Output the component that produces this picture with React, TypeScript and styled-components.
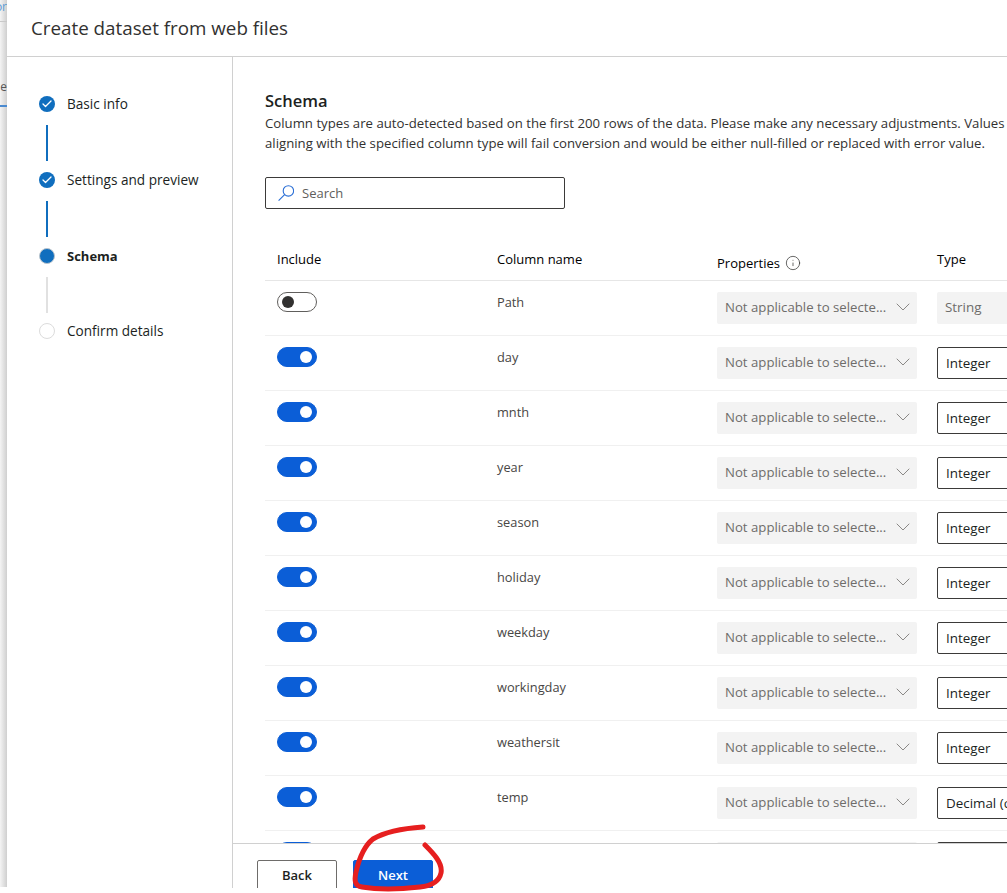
import styled, { createGlobalStyle } from "styled-components";
import { Check, ChevronDown, Info } from "lucide-react";

const GlobalStyle = createGlobalStyle`
  html, body {
    margin: 0;
    padding: 0;
    background: #fff;
  }
  body {
    font-family: "Open Sans", "Noto Sans", "Liberation Sans", sans-serif;
    color: #323130;
  }
  * {
    box-sizing: border-box;
  }
`;

const Page = styled.div`
  position: relative;
  width: 1007px;
  height: 893px;
  display: flex;
  overflow: hidden;
  background: #fff;
`;

const BackPage = styled.div`
  width: 7px;
  height: 887px;
  flex: none;
  overflow: hidden;
  background: linear-gradient(90deg, #f4f4f4, #cfcfcf);
  display: flex;
  flex-direction: column;

  .top {
    height: 22px;
    font-size: 12px;
    line-height: 14px;
    color: #5b9bd5;
    border-bottom: 1px solid #c9c9c9;
    white-space: nowrap;
    direction: rtl;
  }
  .tab {
    margin-top: 57px;
    height: 28px;
    font-size: 12px;
    line-height: 16px;
    color: #555;
    border-bottom: 2px solid #4a8ad0;
    direction: rtl;
  }
`;

const Panel = styled.div`
  flex: 1;
  min-width: 0;
  height: 888px;
  display: flex;
  flex-direction: column;
`;

const Header = styled.header`
  height: 57px;
  flex: none;
  padding: 15px 0 0 24px;
  border-bottom: 1px solid #d0d0d0;
  font-size: 18.8px;
  line-height: 26px;
  color: #323130;
`;

const Body = styled.div`
  flex: 1;
  min-height: 0;
  display: flex;
`;

const Steps = styled.nav`
  width: 226px;
  flex: none;
  padding: 39px 0 0 32px;
  border-right: 1px solid #d0d0d0;
`;

const StepRow = styled.div`
  display: flex;
  align-items: center;
  gap: 12px;
  height: 16px;
`;

const StepDot = styled.span<{ $state: "done" | "current" | "todo" }>`
  width: 16px;
  height: 16px;
  flex: none;
  border-radius: 50%;
  display: flex;
  align-items: center;
  justify-content: center;
  color: #fff;
  background: ${(p) => (p.$state === "todo" ? "#fff" : "#106ebe")};
  border: ${(p) =>
    p.$state === "todo"
      ? "1.5px solid #dcdcdc"
      : p.$state === "current"
        ? "1.5px solid #b9c4cd"
        : "none"};
`;

const StepLabel = styled.span<{ $bold?: boolean }>`
  font-size: ${(p) => (p.$bold ? 13 : 13.6)}px;
  line-height: 16px;
  font-weight: ${(p) => (p.$bold ? 700 : 500)};
  color: #201f1e;
  white-space: nowrap;
`;

const StepLine = styled.div<{ $active?: boolean }>`
  width: 2px;
  height: 36px;
  margin: 13px 0 ${(p) => (p.$active ? 11 : 10)}px 7px;
  background: ${(p) => (p.$active ? "#106ebe" : "#e1e1e1")};
`;

const Main = styled.main`
  flex: 1;
  min-width: 0;
  display: flex;
  flex-direction: column;
`;

const Scroll = styled.div`
  flex: 1;
  min-height: 0;
  overflow: hidden;
  padding: 34px 0 0 32px;
`;

const Title = styled.h2`
  margin: 0;
  font-size: 16.5px;
  line-height: 20px;
  font-weight: 600;
  color: #201f1e;
`;

const Description = styled.p`
  margin: 2px 0 0;
  width: 790px;
  font-size: 13.2px;
  line-height: 20px;
  color: #323130;
`;

const SearchBox = styled.div`
  width: 300px;
  height: 32px;
  margin-top: 24px;
  padding-left: 12px;
  display: flex;
  align-items: center;
  gap: 8px;
  border: 1px solid #3b3a39;
  border-radius: 2px;
  font-size: 13px;
  color: #605e5c;

  svg {
    color: #2b6fd6;
  }
`;

const HeadRow = styled.div`
  width: 800px;
  height: 72px;
  display: grid;
  grid-template-columns: 220px 220px 220px 1fr;
  border-bottom: 1px solid #e6e6e6;
`;

const HeadCell = styled.div<{ $offset: number }>`
  padding: ${(p) => p.$offset}px 0 0 12px;
  display: flex;
  align-items: flex-start;
  gap: 5px;
  font-size: 13px;
  line-height: 20px;
  font-weight: 500;
  color: #000;

  svg {
    margin-top: 2px;
    color: #323130;
  }
`;

const Row = styled.div`
  width: 800px;
  height: 55px;
  display: grid;
  grid-template-columns: 220px 220px 220px 1fr;
  border-bottom: 1px solid #f0f0f0;
  overflow: hidden;
`;

const Cell = styled.div`
  padding: 11px 0 0 12px;
  min-width: 0;
`;

const Toggle = styled.span<{ $on: boolean }>`
  width: 40px;
  height: 20px;
  display: flex;
  align-items: center;
  padding: 0 4px;
  justify-content: ${(p) => (p.$on ? "flex-end" : "flex-start")};
  border-radius: 10px;
  background: ${(p) => (p.$on ? "#0b5ed7" : "#fff")};
  border: 1px solid ${(p) => (p.$on ? "#0b5ed7" : "#605e5c")};

  &::after {
    content: "";
    width: 12px;
    height: 12px;
    border-radius: 50%;
    background: ${(p) => (p.$on ? "#fff" : "#323130")};
  }
`;

const ColumnName = styled.span`
  display: block;
  font-size: 12.8px;
  line-height: 20px;
  color: #484644;
`;

const Select = styled.div`
  width: 200px;
  height: 32px;
  padding: 0 8px 2px;
  display: flex;
  align-items: center;
  justify-content: space-between;
  border-radius: 2px;
  background: #f3f3f3;
  font-size: 13.2px;
  color: #6e6c6a;
  white-space: nowrap;

  svg {
    flex: none;
    margin-right: -6px;
    color: #8a8886;
  }
`;

const TypeField = styled.div<{ $disabled?: boolean }>`
  width: 200px;
  height: 32px;
  padding: 0 8px ${(p) => (p.$disabled ? 2 : 1)}px;
  display: flex;
  align-items: center;
  border-radius: 2px;
  font-size: 13.4px;
  white-space: nowrap;
  color: ${(p) => (p.$disabled ? "#6e6c6a" : "#201f1e")};
  background: ${(p) => (p.$disabled ? "#f3f3f3" : "#fff")};
  border: ${(p) => (p.$disabled ? "none" : "1px solid #3b3a39")};
`;

const Footer = styled.footer`
  height: 45px;
  flex: none;
  padding: 16px 0 0 24px;
  display: flex;
  gap: 16px;
  border-top: 1px solid #d0d0d0;
  overflow: hidden;
`;

const Button = styled.button<{ $primary?: boolean }>`
  width: 80px;
  height: 32px;
  padding: 0 0 2px;
  font-family: inherit;
  font-size: 13px;
  font-weight: 600;
  border-radius: 2px;
  color: ${(p) => (p.$primary ? "#fff" : "#201f1e")};
  background: ${(p) => (p.$primary ? "#0b5ed7" : "#fff")};
  border: 1px solid ${(p) => (p.$primary ? "#0b5ed7" : "#6e6c6a")};
`;

const Scribble = styled.svg`
  position: absolute;
  left: 340px;
  top: 815px;
  pointer-events: none;
`;

const rows = [
  { name: "day", type: "Integer" },
  { name: "mnth", type: "Integer" },
  { name: "year", type: "Integer" },
  { name: "season", type: "Integer" },
  { name: "holiday", type: "Integer" },
  { name: "weekday", type: "Integer" },
  { name: "workingday", type: "Integer" },
  { name: "weathersit", type: "Integer" },
  { name: "temp", type: "Decimal (comma)" },
];

const SearchIcon = () => (
  <svg width="16" height="16" viewBox="0 0 16 16" fill="none" stroke="currentColor" strokeWidth="1.1">
    <circle cx="10.4" cy="5.9" r="5.2" />
    <path d="M6.6 9.7 L0.6 15.6" />
  </svg>
);

const App = () => {
  return (
    <Page>
      <GlobalStyle />
      <BackPage>
        <div className="top">or</div>
        <div className="tab">e</div>
      </BackPage>
      <Panel>
        <Header>Create dataset from web files</Header>
        <Body>
          <Steps>
            <StepRow>
              <StepDot $state="done">
                <Check size={12} strokeWidth={2.6} />
              </StepDot>
              <StepLabel>Basic info</StepLabel>
            </StepRow>
            <StepLine $active />
            <StepRow>
              <StepDot $state="done">
                <Check size={12} strokeWidth={2.6} />
              </StepDot>
              <StepLabel>Settings and preview</StepLabel>
            </StepRow>
            <StepLine $active />
            <StepRow>
              <StepDot $state="current" />
              <StepLabel $bold>Schema</StepLabel>
            </StepRow>
            <StepLine />
            <StepRow>
              <StepDot $state="todo" />
              <StepLabel>Confirm details</StepLabel>
            </StepRow>
          </Steps>
          <Main>
            <Scroll>
              <Title>Schema</Title>
              <Description>
                Column types are auto-detected based on the first 200 rows of the data. Please make
                any necessary adjustments. Values not aligning with the specified column type will
                fail conversion and would be either null-filled or replaced with error value.
              </Description>
              <SearchBox>
                <SearchIcon />
                Search
              </SearchBox>
              <HeadRow>
                <HeadCell $offset={40}>Include</HeadCell>
                <HeadCell $offset={40}>Column name</HeadCell>
                <HeadCell $offset={44}>
                  Properties <Info size={16} strokeWidth={1.1} />
                </HeadCell>
                <HeadCell $offset={40}>Type</HeadCell>
              </HeadRow>
              <Row>
                <Cell>
                  <Toggle $on={false} />
                </Cell>
                <Cell>
                  <ColumnName>Path</ColumnName>
                </Cell>
                <Cell>
                  <Select>
                    Not applicable to selecte...
                    <ChevronDown size={24} strokeWidth={1} />
                  </Select>
                </Cell>
                <Cell>
                  <TypeField $disabled>String</TypeField>
                </Cell>
              </Row>
              {rows.map((row) => (
                <Row key={row.name}>
                  <Cell>
                    <Toggle $on />
                  </Cell>
                  <Cell>
                    <ColumnName>{row.name}</ColumnName>
                  </Cell>
                  <Cell>
                    <Select>
                      Not applicable to selecte...
                      <ChevronDown size={24} strokeWidth={1} />
                    </Select>
                  </Cell>
                  <Cell>
                    <TypeField>{row.type}</TypeField>
                  </Cell>
                </Row>
              ))}
              <Row>
                <Cell>
                  <Toggle $on />
                </Cell>
                <Cell />
                <Cell>
                  <Select />
                </Cell>
                <Cell>
                  <TypeField />
                </Cell>
              </Row>
            </Scroll>
            <Footer>
              <Button>Back</Button>
              <Button $primary>Next</Button>
            </Footer>
          </Main>
        </Body>
      </Panel>
      <Scribble width="120" height="78" viewBox="0 0 120 78" fill="none">
        <path
          d="M83 12 C68 13 48 15 33 24 C24 31 19 44 16 57 C14 66 15 71 22 72 C40 75 62 74 80 72 C90 71 99 67 101 58 C103 48 93 38 85 30"
          stroke="#e61f1f"
          strokeWidth="5"
          strokeLinecap="round"
          strokeLinejoin="round"
        />
      </Scribble>
    </Page>
  );
};

export default App;
